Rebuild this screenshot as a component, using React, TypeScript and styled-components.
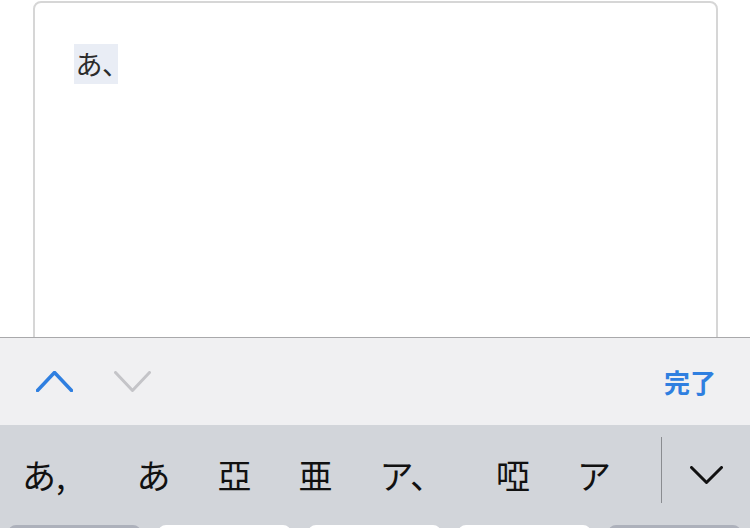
import React from "react";
import styled, { createGlobalStyle } from "styled-components";

const Global = createGlobalStyle`
  html, body { margin: 0; padding: 0; background: #ffffff; }
  body { font-family: "Noto Sans CJK JP", "Noto Sans", sans-serif; }
`;

const Screen = styled.div`
  width: 750px;
  height: 528px;
  overflow: hidden;
  display: flex;
  flex-direction: column;
  background: #ffffff;
`;

const Page = styled.div`
  height: 337px;
  flex: none;
  overflow: hidden;
  padding: 1px 32px 0 33px;
  box-sizing: border-box;
`;

const Editor = styled.div`
  height: 420px;
  border: 2px solid #d6d6d6;
  border-radius: 8px;
  box-sizing: border-box;
  padding: 41px 39px;
`;

const Marked = styled.span`
  display: inline-block;
  background: #e9edf5;
  color: #2b2b2b;
  font-size: 27px;
  line-height: 40px;
  height: 40px;
  padding: 0 2px;
  font-feature-settings: "palt";
`;

const Toolbar = styled.div`
  height: 88px;
  flex: none;
  box-sizing: border-box;
  border-top: 1px solid #a9a9ab;
  background: #f0f0f2;
  display: flex;
  align-items: center;
  padding: 0 34px 0 36px;
  gap: 41px;
`;

const Spacer = styled.div`
  flex: 1;
`;

const Done = styled.span`
  font-size: 26px;
  font-weight: 700;
  color: #2f7fe0;
`;

const CandidateBar = styled.div`
  flex: 1;
  background: #d2d5da;
  display: flex;
  flex-direction: column;
`;

const CandidateRow = styled.div`
  height: 100px;
  flex: none;
  display: flex;
  align-items: center;
`;

const Candidates = styled.div`
  width: 661px;
  height: 100%;
  overflow: hidden;
  display: flex;
  align-items: center;
  padding-left: 22px;
  box-sizing: border-box;
  gap: 47px;
  white-space: nowrap;
`;

const Candidate = styled.span<{ $extra?: number }>`
  font-size: 34px;
  color: #111111;
  line-height: 1;
  margin-right: ${(p) => p.$extra ?? 0}px;
  flex: none;
`;

const Divider = styled.div`
  width: 1px;
  height: 66px;
  align-self: flex-start;
  margin-top: 12px;
  background: #8a8c90;
  flex: none;
`;

const Expand = styled.div`
  flex: 1;
  display: flex;
  align-items: center;
  justify-content: center;
  height: 100%;
`;

const Keys = styled.div`
  display: flex;
  gap: 17px;
  padding: 0 9px 0 8px;
`;

const Key = styled.div<{ $dark?: boolean }>`
  flex: 1;
  height: 40px;
  border-radius: 8px;
  background: ${(p) => (p.$dark ? "#adb1bb" : "#ffffff")};
`;

const Chevron = ({ dir, color, w, h, sw }: { dir: "up" | "down"; color: string; w: number; h: number; sw: number }) => {
  const pts = dir === "up" ? `1.5,${h - 1.5} ${w / 2},1.5 ${w - 1.5},${h - 1.5}` : `1.5,1.5 ${w / 2},${h - 1.5} ${w - 1.5},1.5`;
  return (
    <svg width={w} height={h} viewBox={`0 0 ${w} ${h}`} fill="none">
      <polyline points={pts} stroke={color} strokeWidth={sw} strokeLinecap="round" strokeLinejoin="round" />
    </svg>
  );
};

export default function App() {
  return (
    <Screen>
      <Global />
      <Page>
        <Editor>
          <Marked>あ、</Marked>
        </Editor>
      </Page>
      <Toolbar>
        <Chevron dir="up" color="#2f7fe0" w={37} h={21} sw={3.5} />
        <Chevron dir="down" color="#c4c4c8" w={37} h={21} sw={3} />
        <Spacer />
        <Done>完了</Done>
      </Toolbar>
      <CandidateBar>
        <CandidateRow>
          <Candidates>
            <Candidate $extra={24}>あ,</Candidate>
            <Candidate>あ</Candidate>
            <Candidate>亞</Candidate>
            <Candidate>亜</Candidate>
            <Candidate $extra={5}>ア、</Candidate>
            <Candidate>啞</Candidate>
            <Candidate>ア</Candidate>
            <Candidate>あ</Candidate>
          </Candidates>
          <Divider />
          <Expand>
            <Chevron dir="down" color="#111111" w={33} h={18} sw={3} />
          </Expand>
        </CandidateRow>
        <Keys>
          <Key $dark />
          <Key />
          <Key />
          <Key />
          <Key $dark />
        </Keys>
      </CandidateBar>
    </Screen>
  );
}
